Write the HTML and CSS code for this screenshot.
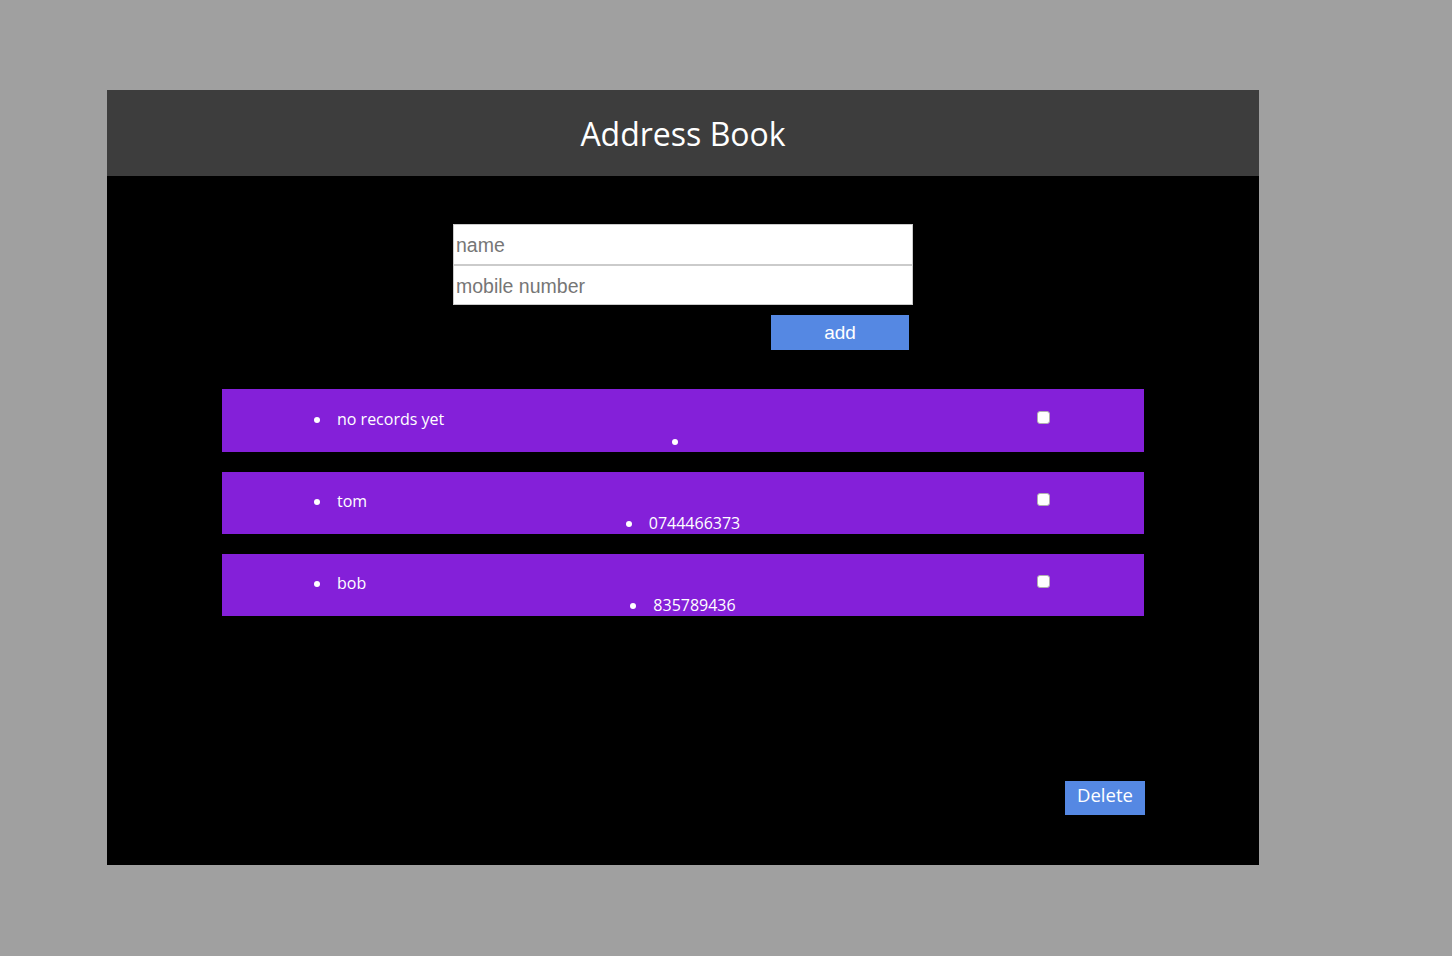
FILE: index.html
```html
<!DOCTYPE html>
<html lang="en">
<head>
<meta charset="utf-8">
<title>Address Book</title>
<link rel="stylesheet" href="styles.css">
</head>
<body>
<div class="app">
  <header class="app-header"><h1 class="app-title">Address Book</h1></header>
  <main class="app-body">
    <form class="entry-form">
      <input class="field field-first" type="text" placeholder="name">
      <input class="field field-second" type="text" placeholder="mobile number">
      <div class="form-actions"><button type="button" class="btn-add">add</button></div>
    </form>
    <div class="records">
      <div class="record">
        <div class="record-top">
          <ul class="record-name"><li>no records yet</li></ul>
          <input type="checkbox" class="record-check">
        </div>
        <ul class="record-number"><li></li></ul>
      </div>
      <div class="record">
        <div class="record-top">
          <ul class="record-name"><li>tom</li></ul>
          <input type="checkbox" class="record-check">
        </div>
        <ul class="record-number"><li>0744466373</li></ul>
      </div>
      <div class="record">
        <div class="record-top">
          <ul class="record-name"><li>bob</li></ul>
          <input type="checkbox" class="record-check">
        </div>
        <ul class="record-number"><li>835789436</li></ul>
      </div>
    </div>
    <div class="footer-actions"><button type="button" class="btn-delete">Delete</button></div>
  </main>
</div>
</body>
</html>
```

FILE: styles.css
```css
html, body {
  margin: 0;
  padding: 0;
}
body {
  background: #a0a0a0;
  font-family: "Open Sans", "Liberation Sans", sans-serif;
  height: 956px;
  overflow: hidden;
}
.app {
  width: 1152px;
  margin: 90px 0 0 107px;
  display: flex;
  flex-direction: column;
}
.app-header {
  background: #3d3d3d;
  height: 86px;
  display: flex;
  align-items: center;
  justify-content: center;
}
.app-title {
  margin: 0;
  font-size: 32px;
  font-weight: 400;
  color: #ffffff;
  line-height: 44px;
  position: relative;
  top: 1px;
}
.app-body {
  background: #000;
  height: 689px;
  box-sizing: border-box;
  padding-top: 48px;
  display: flex;
  flex-direction: column;
  align-items: center;
}
.entry-form {
  width: 460px;
  display: flex;
  flex-direction: column;
  margin: 0;
}
.field {
  display: block;
  box-sizing: border-box;
  width: 460px;
  margin: 0;
  border: 1px solid #cbcbcb;
  background: #fff;
  padding: 0 2px;
  font-family: "Liberation Sans", Arial, sans-serif;
  font-size: 19.5px;
  color: #333;
  outline: none;
}
.field::placeholder {
  color: #767676;
}
.field-first {
  height: 41px;
  padding-top: 2px;
}
.field-second {
  height: 40px;
  padding-top: 2px;
}
.form-actions {
  display: flex;
  justify-content: flex-end;
  padding-right: 4px;
  margin-top: 10px;
}
.btn-add {
  width: 138px;
  height: 35px;
  border: none;
  background: #5588e3;
  color: #fff;
  font-family: "Liberation Sans", Arial, sans-serif;
  font-size: 19px;
  padding: 0;
  cursor: pointer;
}
.records {
  width: 922px;
  margin-top: 39px;
  display: flex;
  flex-direction: column;
  gap: 20px;
}
.record {
  background: #8420d9;
  height: 62px;
  box-sizing: border-box;
  padding-top: 18px;
  color: #fff;
  font-size: 16px;
  line-height: 22px;
}
.record:first-child {
  height: 63px;
  padding-top: 19px;
}
.record-top {
  display: flex;
  align-items: center;
}
.record-name {
  flex: 1;
  margin: 0;
  padding: 0 0 0 92px;
  list-style: disc inside;
}
.record-check {
  -webkit-appearance: none;
  appearance: none;
  box-sizing: border-box;
  width: 13px;
  height: 13px;
  margin: 0 94px 4px 0;
  background: #fff;
  border: 1px solid #b0b0b0;
  border-radius: 3px;
}
.record-number {
  margin: 0;
  padding: 0;
  list-style: disc inside;
  text-align: center;
}
.record-number li {
  min-height: 22px;
}
.footer-actions {
  width: 922px;
  display: flex;
  justify-content: flex-end;
  margin-top: 165px;
  position: relative;
  left: 1px;
}
.btn-delete {
  width: 80px;
  height: 34px;
  border: none;
  background: #5588e3;
  color: #fff;
  font-family: "Open Sans", sans-serif;
  font-size: 18.5px;
  padding: 0 0 7px 0;
  line-height: 24px;
  cursor: pointer;
}
```
